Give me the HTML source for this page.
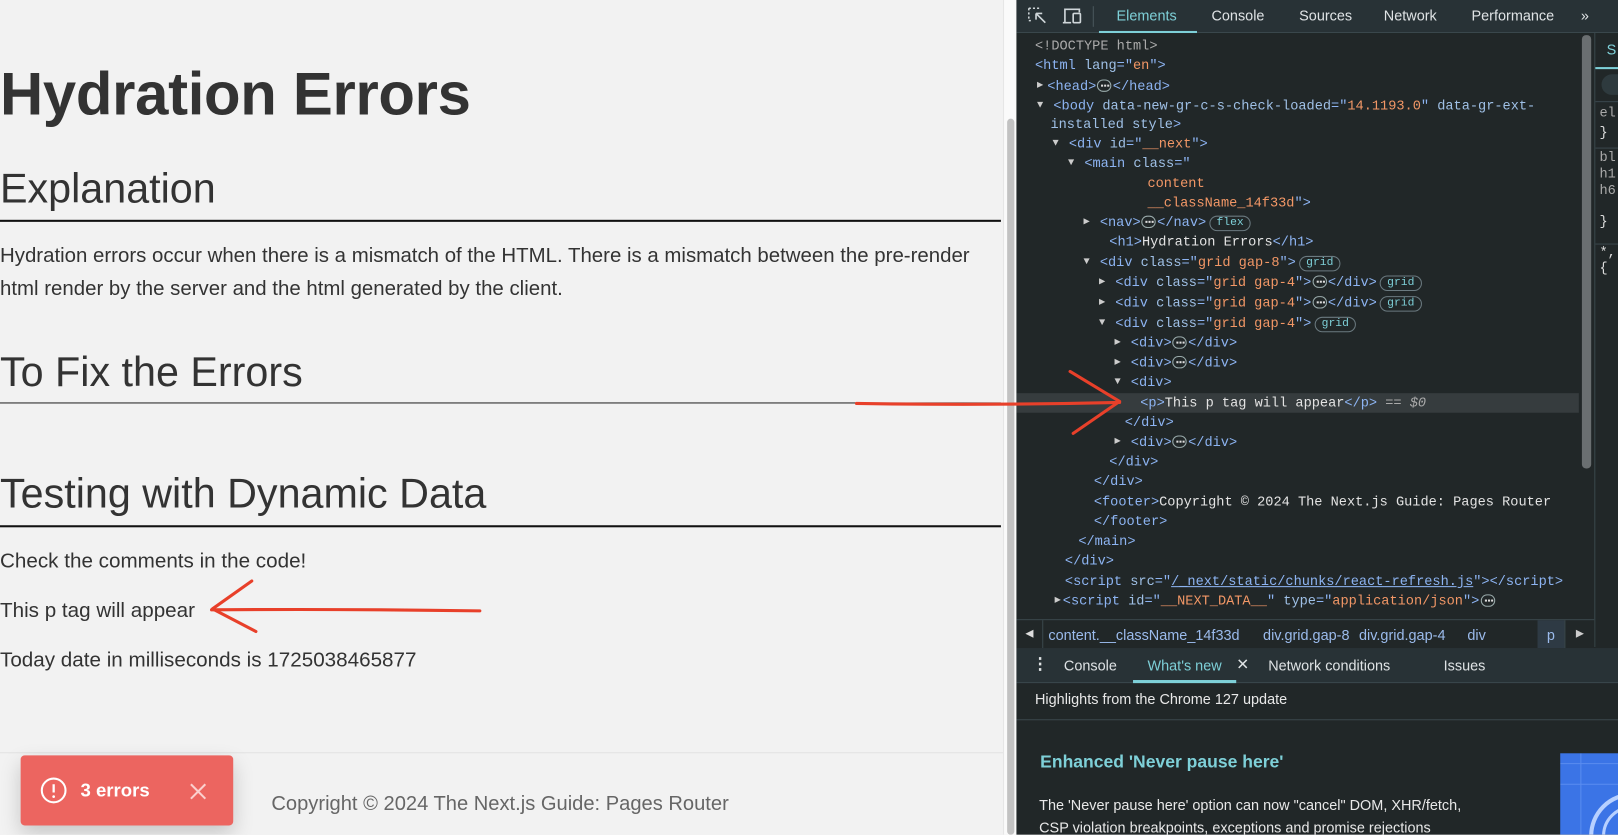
<!DOCTYPE html>
<html><head><meta charset="utf-8"><style>
*{margin:0;padding:0;box-sizing:border-box}
html,body{width:1618px;height:835px;overflow:hidden}
body{position:relative;background:#f2f2f2;font-family:"Liberation Sans",sans-serif}
#w{position:absolute;left:0;top:0;width:1568px;height:809px;overflow:hidden;transform:scale(1.0319);transform-origin:0 0}
.pg{position:absolute;left:0;top:0;width:972px;height:809px;background:#f2f2f2;color:#333}
.abs{position:absolute;white-space:nowrap}
.h1{font-size:58px;font-weight:bold;left:0;top:58px;letter-spacing:-0.3px}
.h2{font-size:40px;left:0}
.p{font-size:20px;left:0;color:#333}
.sb{position:absolute;left:972px;top:0;width:13px;height:809px;background:#fafafa;border-left:1px solid #e6e6e6}
.sb div{position:absolute;left:3px;top:115px;width:7px;height:694px;border-radius:4px;background:#c2c2c2}
.dt{position:absolute;left:985px;top:0;width:583px;height:809px;background:#212728;color:#e3e3e3;overflow:hidden}
.tb{position:absolute;left:0;top:0;width:633px;height:32px;background:#283236;border-bottom:1px solid #3a474c;font-size:14px;color:#dfe3e5}
.tb span{position:absolute;top:7px}
.code{font-family:"Liberation Mono",monospace;font-size:13.2px;color:#e3e3e3}
.code div{position:absolute;white-space:nowrap;height:19px;line-height:19px}
.t{color:#8db4f2}.a{color:#9fc0e6}.v{color:#f29766}.g{color:#aaa}
.pill{display:inline-block;border:1px solid #6b7a80;border-radius:8px;font-size:11px;line-height:13px;padding:0 6px;color:#7ed0d8;margin-left:3px;vertical-align:1px}
.dots{display:inline-block;border:1px solid #9aa;border-radius:7px;width:14px;height:12px;position:relative;vertical-align:-2px;margin:0 1px}
.dots::after{content:"";position:absolute;left:3px;top:4px;width:2px;height:2px;background:#ddd;box-shadow:3px 0 #ddd,6px 0 #ddd}
.ar{font-size:10px;color:#ccc;position:absolute}
</style></head><body><div id="w">
<div class="pg">
  <div class="abs h1">Hydration Errors</div>
  <div class="abs h2" style="top:161px">Explanation</div>
  <div style="position:absolute;left:0;top:213px;width:970px;height:2px;background:#111"></div>
  <div class="abs p" style="top:232px;line-height:32px;font-size:19.8px">Hydration errors occur when there is a mismatch of the HTML. There is a mismatch between the pre-render<br>html render by the server and the html generated by the client.</div>
  <div class="abs h2" style="top:339px">To Fix the Errors</div>
  <div style="position:absolute;left:0;top:390px;width:970px;height:1px;background:#222"></div>
  <div class="abs h2" style="top:457px">Testing with Dynamic Data</div>
  <div style="position:absolute;left:0;top:509px;width:970px;height:2px;background:#111"></div>
  <div class="abs p" style="top:533px">Check the comments in the code!</div>
  <div class="abs p" style="top:581px">This p tag will appear</div>
  <div class="abs p" style="top:629px">Today date in milliseconds is 1725038465877</div>
  <div style="position:absolute;left:0;top:729px;width:972px;height:1px;background:#e2e2e2"></div>
  <div class="abs" style="left:263px;top:768px;font-size:19.5px;color:#666">Copyright © 2024 The Next.js Guide: Pages Router</div>
  <div style="position:absolute;left:20px;top:732px;width:206px;height:68px;background:#ec6560;border-radius:4px;box-shadow:0 8px 20px rgba(0,0,0,.18);color:#fff">
    <svg style="position:absolute;left:19px;top:21px" width="26" height="26" viewBox="0 0 26 26"><circle cx="13" cy="13" r="11.5" fill="none" stroke="#fff" stroke-width="2"/><line x1="13" y1="7" x2="13" y2="15" stroke="#fff" stroke-width="2.2"/><circle cx="13" cy="19" r="1.3" fill="#fff"/></svg>
    <span class="abs" style="left:58px;top:24px;font-size:18px;font-weight:bold">3 errors</span>
    <svg style="position:absolute;left:163px;top:26px" width="18" height="18" viewBox="0 0 18 18"><path d="M2 2L16 16M16 2L2 16" stroke="#fbd0ce" stroke-width="2"/></svg>
  </div>
</div>
<div class="sb"><div></div></div>
<div class="dt">
  <div class="tb">
    <svg style="position:absolute;left:11px;top:7px" width="20" height="18" viewBox="0 0 20 18"><path d="M1 1h12M1 1v12M1 13h4" stroke="#cfd6d9" stroke-width="1.5" stroke-dasharray="2 2" fill="none"/><path d="M8 6l9 9M8 6v6M8 6h6" stroke="#cfd6d9" stroke-width="1.6" fill="none"/></svg>
    <svg style="position:absolute;left:44px;top:7px" width="22" height="18" viewBox="0 0 22 18"><path d="M3 15V2h14v3M1 15h8" stroke="#cfd6d9" stroke-width="1.6" fill="none"/><rect x="11" y="6" width="7" height="9" rx="1" stroke="#cfd6d9" stroke-width="1.6" fill="none"/></svg>
    <div style="position:absolute;left:74px;top:6px;width:1px;height:20px;background:#4a575c"></div>
    <span style="left:97px;color:#7ed0d8">Elements</span>
    <div style="position:absolute;left:80px;top:30px;width:95px;height:2px;background:#7ed0d8"></div>
    <span style="left:189px">Console</span>
    <span style="left:274px">Sources</span>
    <span style="left:356px">Network</span>
    <span style="left:441px">Performance</span>
    <span style="left:547px">»</span>
  </div>
  <div class="code">
    <div style="left:18px;top:35px" class="g">&lt;!DOCTYPE html&gt;</div>
    <div style="left:18px;top:54px"><span class="t">&lt;html </span><span class="a">lang</span><span class="t">="</span><span class="v">en</span><span class="t">"&gt;</span></div>
    <div style="left:22px;top:74px"><span class="ar" style="left:-2px">▶</span>&nbsp;<span class="t">&lt;head&gt;</span><span class="dots"></span><span class="t">&lt;/head&gt;</span></div>
    <div style="left:20px;top:93px"><span class="ar" style="left:0">▼</span>&nbsp;&nbsp;<span class="t">&lt;body </span><span class="a">data-new-gr-c-s-check-loaded</span><span class="t">="</span><span class="v">14.1193.0</span><span class="t">" </span><span class="a">data-gr-ext-</span></div>
    <div style="left:33px;top:111px"><span class="a">installed style</span><span class="t">&gt;</span></div>
    <div style="left:35px;top:130px"><span class="ar" style="left:0">▼</span>&nbsp;&nbsp;<span class="t">&lt;div </span><span class="a">id</span><span class="t">="</span><span class="v">__next</span><span class="t">"&gt;</span></div>
    <div style="left:50px;top:149px"><span class="ar" style="left:0">▼</span>&nbsp;&nbsp;<span class="t">&lt;main </span><span class="a">class</span><span class="t">="</span></div>
    <div style="left:127px;top:168px" class="v">content</div>
    <div style="left:127px;top:187px"><span class="v">__className_14f33d</span><span class="t">"&gt;</span></div>
    <div style="left:65px;top:206px"><span class="ar" style="left:0">▶</span>&nbsp;&nbsp;<span class="t">&lt;nav&gt;</span><span class="dots"></span><span class="t">&lt;/nav&gt;</span><span class="pill">flex</span></div>
    <div style="left:90px;top:225px"><span class="t">&lt;h1&gt;</span>Hydration Errors<span class="t">&lt;/h1&gt;</span></div>
    <div style="left:65px;top:245px"><span class="ar" style="left:0">▼</span>&nbsp;&nbsp;<span class="t">&lt;div </span><span class="a">class</span><span class="t">="</span><span class="v">grid gap-8</span><span class="t">"&gt;</span><span class="pill">grid</span></div>
    <div style="left:80px;top:264px"><span class="ar" style="left:0">▶</span>&nbsp;&nbsp;<span class="t">&lt;div </span><span class="a">class</span><span class="t">="</span><span class="v">grid gap-4</span><span class="t">"&gt;</span><span class="dots"></span><span class="t">&lt;/div&gt;</span><span class="pill">grid</span></div>
    <div style="left:80px;top:284px"><span class="ar" style="left:0">▶</span>&nbsp;&nbsp;<span class="t">&lt;div </span><span class="a">class</span><span class="t">="</span><span class="v">grid gap-4</span><span class="t">"&gt;</span><span class="dots"></span><span class="t">&lt;/div&gt;</span><span class="pill">grid</span></div>
    <div style="left:80px;top:304px"><span class="ar" style="left:0">▼</span>&nbsp;&nbsp;<span class="t">&lt;div </span><span class="a">class</span><span class="t">="</span><span class="v">grid gap-4</span><span class="t">"&gt;</span><span class="pill">grid</span></div>
    <div style="left:95px;top:323px"><span class="ar" style="left:0">▶</span>&nbsp;&nbsp;<span class="t">&lt;div&gt;</span><span class="dots"></span><span class="t">&lt;/div&gt;</span></div>
    <div style="left:95px;top:342px"><span class="ar" style="left:0">▶</span>&nbsp;&nbsp;<span class="t">&lt;div&gt;</span><span class="dots"></span><span class="t">&lt;/div&gt;</span></div>
    <div style="left:95px;top:361px"><span class="ar" style="left:0">▼</span>&nbsp;&nbsp;<span class="t">&lt;div&gt;</span></div>
    <div style="left:0;top:381px;width:545px;background:#363c3e"></div>
    <div style="left:120px;top:381px"><span class="t">&lt;p&gt;</span>This p tag will appear<span class="t">&lt;/p&gt;</span> <span class="g">== <i>$0</i></span></div>
    <div style="left:105px;top:400px" class="t">&lt;/div&gt;</div>
    <div style="left:95px;top:419px"><span class="ar" style="left:0">▶</span>&nbsp;&nbsp;<span class="t">&lt;div&gt;</span><span class="dots"></span><span class="t">&lt;/div&gt;</span></div>
    <div style="left:90px;top:438px" class="t">&lt;/div&gt;</div>
    <div style="left:75px;top:457px" class="t">&lt;/div&gt;</div>
    <div style="left:75px;top:477px"><span class="t">&lt;footer&gt;</span>Copyright © 2024 The Next.js Guide: Pages Router</div>
    <div style="left:75px;top:496px" class="t">&lt;/footer&gt;</div>
    <div style="left:60px;top:515px" class="t">&lt;/main&gt;</div>
    <div style="left:47px;top:534px" class="t">&lt;/div&gt;</div>
    <div style="left:47px;top:554px"><span class="t">&lt;script </span><span class="a">src</span><span class="t">="</span><span class="t" style="text-decoration:underline">/_next/static/chunks/react-refresh.js</span><span class="t">"&gt;&lt;/script&gt;</span></div>
    <div style="left:37px;top:573px"><span class="ar" style="left:0">▶</span>&nbsp;<span class="t">&lt;script </span><span class="a">id</span><span class="t">="</span><span class="v">__NEXT_DATA__</span><span class="t">" </span><span class="a">type</span><span class="t">="</span><span class="v">application/json</span><span class="t">"&gt;</span><span class="dots"></span></div>
  </div>
  <div style="position:absolute;left:548px;top:34px;width:9px;height:420px;border-radius:4px;background:#6a6f71"></div>
  <div style="position:absolute;left:560px;top:32px;width:1px;height:595px;background:#3a474c"></div>
  <div class="abs" style="left:572px;top:40px;color:#7ed0d8;font-size:14px">S</div>
  <div style="position:absolute;left:561px;top:65px;width:72px;height:2px;background:#7ed0d8"></div>
  <div style="position:absolute;left:567px;top:72px;width:40px;height:20px;border-radius:10px;background:#2e3a3e"></div>
  <div class="abs code" style="left:565px;top:100px;line-height:19px;color:#aaa">el<br><span style="color:#ddd">}</span></div>
  <div class="abs code" style="left:565px;top:145px;line-height:16px;color:#aaa">bl<br>h1<br>h6</div>
  <div class="abs code" style="left:565px;top:207px;color:#ddd">}</div>
  <div class="abs code" style="left:565px;top:237px;color:#ddd;line-height:15px">*,<br>{</div>
  <div style="position:absolute;left:561px;top:98px;width:72px;height:1px;background:#3a474c"></div>
  <div style="position:absolute;left:561px;top:143px;width:72px;height:1px;background:#3a474c"></div>
  <div style="position:absolute;left:561px;top:236px;width:72px;height:1px;background:#3a474c"></div>
  <div style="position:absolute;left:0;top:600px;width:560px;height:28px;background:#212728;border-top:1px solid #3a474c;font-size:14px;color:#9bbbec">
    <div style="position:absolute;left:0;top:0;width:26px;height:27px;border-right:1px solid #3a474c;color:#ddd;font-size:10px;text-align:center;line-height:27px">◀</div>
    <span class="abs" style="left:31px;top:6px">content.__className_14f33d</span>
    <span class="abs" style="left:239px;top:6px">div.grid.gap-8</span>
    <span class="abs" style="left:332px;top:6px">div.grid.gap-4</span>
    <span class="abs" style="left:437px;top:6px">div</span>
    <div style="position:absolute;left:505px;top:0;width:26px;height:27px;background:#2e3a44"></div>
    <span class="abs" style="left:514px;top:6px">p</span>
    <div style="position:absolute;left:531px;top:0;width:29px;height:27px;border-left:1px solid #3a474c;color:#ccc;font-size:10px;text-align:center;line-height:27px">▶</div>
  </div>
  <div style="position:absolute;left:0;top:628px;width:633px;height:34px;background:#283236;border-bottom:1px solid #3a474c;font-size:14px;color:#dfe3e5">
    <span class="abs" style="left:15px;top:6px;font-size:16px;font-weight:bold">⋮</span>
    <span class="abs" style="left:46px;top:9px">Console</span>
    <span class="abs" style="left:127px;top:9px;color:#7ed0d8">What's new</span>
    <span class="abs" style="left:213px;top:7px;font-size:15px">✕</span>
    <div style="position:absolute;left:113px;top:31px;width:100px;height:3px;background:#7ed0d8"></div>
    <span class="abs" style="left:244px;top:9px">Network conditions</span>
    <span class="abs" style="left:414px;top:9px">Issues</span>
  </div>
  <div class="abs" style="left:18px;top:669px;font-size:14px;color:#e8e8e8">Highlights from the Chrome 127 update</div>
  <div style="position:absolute;left:0;top:697px;width:633px;height:1px;background:#3a474c"></div>
  <div class="abs" style="left:23px;top:729px;font-size:17px;font-weight:bold;color:#7ed0d8">Enhanced 'Never pause here'</div>
  <div class="abs" style="left:22px;top:769px;font-size:14px;line-height:22px;color:#e8e8e8">The 'Never pause here' option can now "cancel" DOM, XHR/fetch,<br>CSP violation breakpoints, exceptions and promise rejections</div>
  <div style="position:absolute;left:527px;top:730px;width:56px;height:79px;background:#3b74e6;overflow:hidden">
    <svg width="56" height="79"><circle cx="70" cy="80" r="40" fill="none" stroke="#b7d0ff" stroke-width="4"/><circle cx="70" cy="80" r="28" fill="none" stroke="#b7d0ff" stroke-width="3"/><path d="M0 10H56M0 30H56M20 0V80" stroke="#5a8cf0"/></svg>
  </div>
</div>
<svg style="position:absolute;left:0;top:0" width="1568" height="809">
  <path d="M830 391 Q960 393 1085 390" stroke="#e8402a" stroke-width="3" fill="none" stroke-linecap="round"/>
  <path d="M1037 360 L1085 389 L1040 420" stroke="#e8402a" stroke-width="3" fill="none" stroke-linecap="round" stroke-linejoin="round"/>
  <path d="M205 591 Q330 590 465 592" stroke="#e8402a" stroke-width="3" fill="none" stroke-linecap="round"/>
  <path d="M244 563 L206 590 L248 612" stroke="#e8402a" stroke-width="3" fill="none" stroke-linecap="round" stroke-linejoin="round"/>
</svg>
</div></body></html>
